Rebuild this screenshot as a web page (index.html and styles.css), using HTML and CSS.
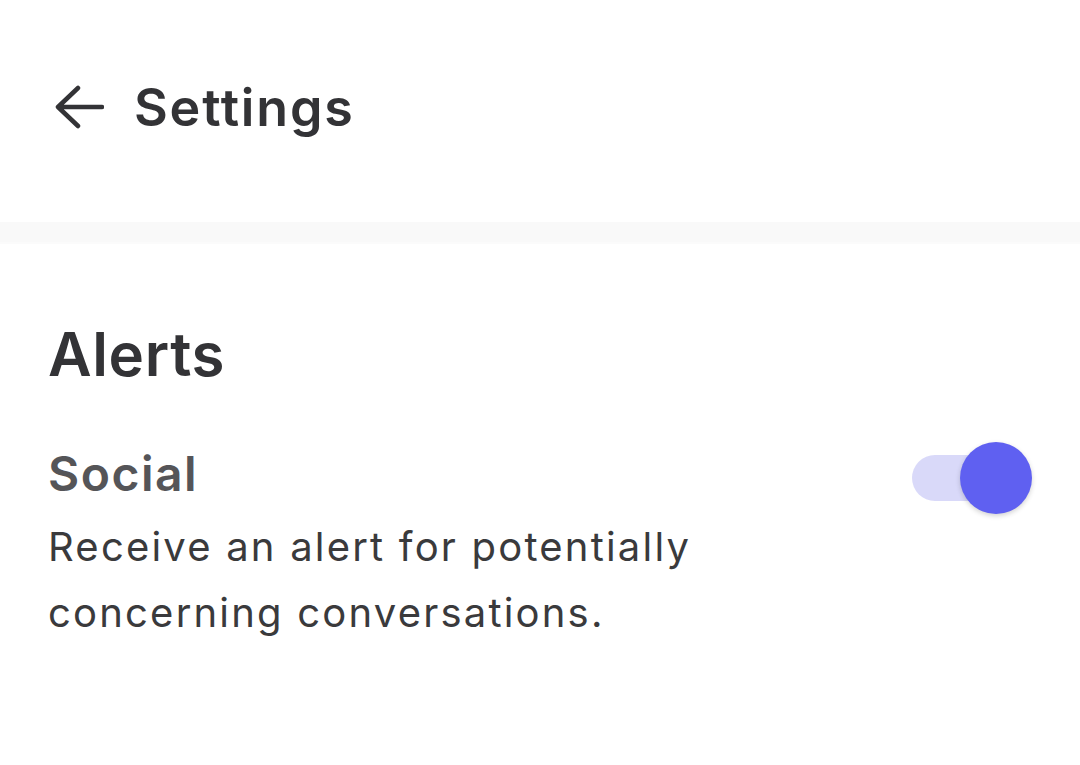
FILE: index.html
```html
<!DOCTYPE html>
<html>
<head>
<meta charset="utf-8">
<link rel="stylesheet" href="styles.css">
</head>
<body>
<header class="topbar">
  <svg class="back" width="50" height="44" viewBox="0 0 50 44" fill="none" stroke="#333336" stroke-width="4.5" stroke-linecap="round" stroke-linejoin="round">
    <path d="M48 22H4M24 3L4 22l20 19"/>
  </svg>
  <h1 class="title">Settings</h1>
</header>
<div class="band"></div>
<main class="content">
  <h2 class="section">Alerts</h2>
  <div class="row">
    <div class="text">
      <div class="label">Social</div>
      <p class="desc">Receive an alert for potentially concerning conversations.</p>
    </div>
    <div class="toggle"><div class="track"></div><div class="knob"></div></div>
  </div>
</main>
</body>
</html>
```
FILE: styles.css
```css
* { box-sizing: border-box; }
body { margin: 0; background: #fff; font-family: Inter, "Noto Sans", sans-serif; color: #333336; width: 1080px; height: 765px; overflow: hidden; }
.topbar { height: 222px; display: flex; align-items: center; padding-left: 54px; gap: 30px; padding-bottom: 8px; }
.back { display: block; }
.title { margin: 0; font-size: 52px; font-weight: 600; color: #333336; letter-spacing: 1.8px; }
.band { height: 22px; background: #f9f9f9; border-bottom: 2px solid #fbfbfb; }
.content { padding: 70px 48px 0 48px; }
.section { margin: 0; font-size: 60px; font-weight: 600; line-height: 80px; color: #333336; letter-spacing: 0.6px; }
.row { display: flex; justify-content: space-between; align-items: flex-start; margin-top: 50px; }
.label { font-size: 48px; font-weight: 600; color: #555558; line-height: 60px; letter-spacing: 1.5px; }
.desc { margin: 10px 0 0; font-size: 40px; line-height: 66px; width: 700px; color: #3a3a3c; letter-spacing: 2.2px; }
.toggle { position: relative; width: 120px; height: 72px; margin-top: -2px; }
.track { position: absolute; left: 0; top: 13px; width: 100px; height: 46px; border-radius: 23px; background: #d9d9f9; }
.knob { position: absolute; right: 0; top: 0; width: 72px; height: 72px; border-radius: 50%; background: #5f60f1; box-shadow: 0 2px 5px rgba(0,0,0,0.18); }
```
